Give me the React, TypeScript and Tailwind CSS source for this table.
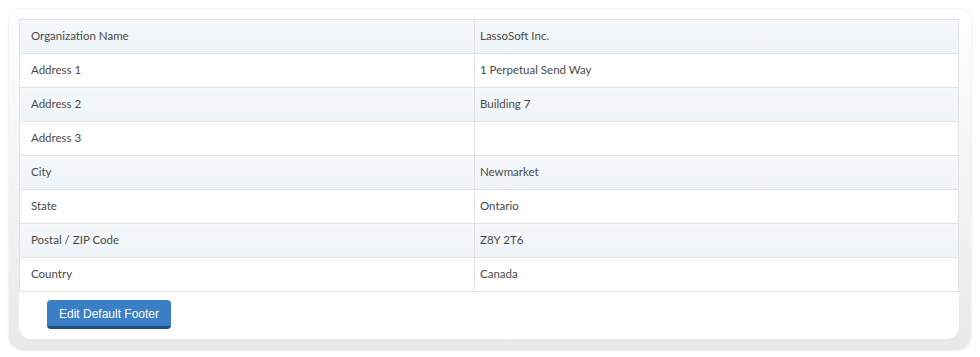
import React from "react";

const rows: [string, string][] = [
  ["Organization Name", "LassoSoft Inc."],
  ["Address 1", "1 Perpetual Send Way"],
  ["Address 2", "Building 7"],
  ["Address 3", ""],
  ["City", "Newmarket"],
  ["State", "Ontario"],
  ["Postal / ZIP Code", "Z8Y 2T6"],
  ["Country", "Canada"],
];

export default function App() {
  return (
    <div className="w-[980px] h-[357px] bg-white pt-[9px] pl-[9px]">
      <div className="w-[962px] h-[341px] rounded-[14px] bg-gradient-to-b from-white to-[#e9e9e9] shadow-[0_0_3px_rgba(0,0,0,0.12)] pt-[10px] pl-[10px]">
        <div className="w-[940px] h-[320px] bg-white rounded-b-[12px]">
          <table className="w-[940px] border-collapse border border-[#d9d9d9] text-[11.5px] text-[#4a4a4a]" style={{ fontFamily: "Lato, 'Noto Sans', sans-serif" }}>
            <tbody>
              {rows.map(([k, v], i) => (
                <tr key={k} className={i % 2 === 0 ? "bg-gradient-to-b from-[#f6f8fa] to-[#eef4f8]" : "bg-white"}>
                  <td className="h-[34px] w-[455px] px-[11px] pb-[2px] border border-[#e2e2e2]">{k}</td>
                  <td className="h-[34px] px-[5px] pb-[2px] border border-[#e2e2e2]">{v}</td>
                </tr>
              ))}
            </tbody>
          </table>
          <div className="pl-[28px] pt-[8px]">
            <button className="w-[124px] h-[29px] rounded-[4px] bg-[#3a7ec6] border-b-[3px] border-[#1d4f80] text-white text-[12px] leading-none pt-[2px]" style={{ fontFamily: "'Liberation Sans', Arial, sans-serif" }}>
              Edit Default Footer
            </button>
          </div>
        </div>
      </div>
    </div>
  );
}
